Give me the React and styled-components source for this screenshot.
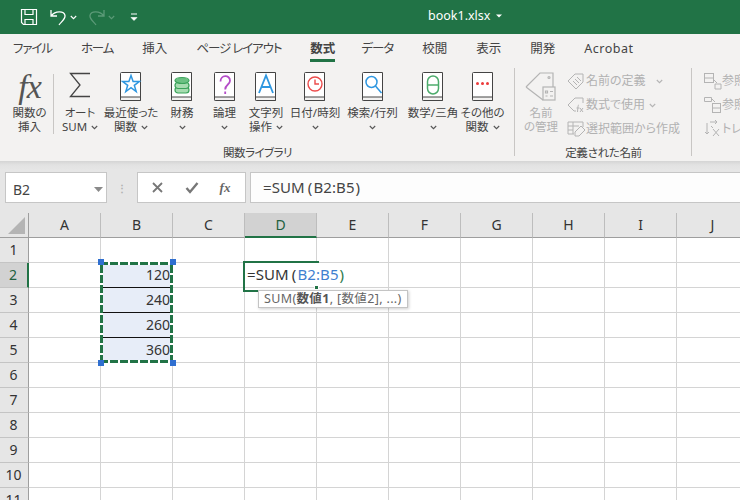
import React from "react";
import styled, { createGlobalStyle } from "styled-components";

const Global = createGlobalStyle`
  html, body { margin: 0; padding: 0; background: #fff; }
  body { font-family: "Noto Sans", "Noto Sans CJK JP", sans-serif; }
  * { box-sizing: border-box; font-feature-settings: "palt" !important; }
`;

const FONT = `"Noto Sans", "Noto Sans CJK JP", sans-serif`;
const GREEN = "#217346";

const Page = styled.div`
  width: 740px; height: 500px; overflow: hidden; display: flex; flex-direction: column; background: #fff;
`;
const TitleBar = styled.header`
  height: 34px; flex: none; background: ${GREEN}; display: flex; align-items: center; color: #fff;
`;
const Qat = styled.div`
  width: 428px; flex: none; display: flex; align-items: center; padding-left: 20px;
`;
const QatBtn = styled.span`
  display: inline-flex; align-items: center; margin-right: ${p => p.$mr}px;
`;
const Title = styled.div`
  font: 12.5px ${FONT}; display: flex; align-items: center; gap: 6px; color: #fff; margin-top: -3px;
`;
const Tabs = styled.nav`
  height: 28px; flex: none; background: #f3f2f1; display: flex; padding-left: 13px; gap: 29px;
`;
const Tab = styled.div`
  height: 28px; padding-top: 6px; font: ${p => (p.$active ? 700 : 400)} 12.5px/18px ${FONT}; color: #444; white-space: nowrap;
  letter-spacing: ${p => p.$ls || 0}px; margin-right: ${p => p.$mr || 0}px;
  border-bottom: 3px solid ${p => (p.$active ? GREEN : "transparent")};
`;
const Ribbon = styled.section`
  height: 99px; flex: none; background: #f3f2f1; display: flex; overflow: hidden; padding-left: 6px;
`;
const Group = styled.div`
  width: ${p => p.$w}px; flex: none; display: flex; flex-direction: column; position: relative; padding-top: 10px;
  &::after { content: ""; display: ${p => (p.$noSep ? "none" : "block")}; position: absolute; right: 0; top: 6px; bottom: 5px; width: 1px; background: #c8c6c4; }
`;
const GroupBody = styled.div`
  display: flex; height: 72px; flex: none;
`;
const GroupLabel = styled.div`
  font: 11.5px/16px ${FONT}; color: #444; text-align: center; margin-top: 1px; padding-right: ${p => p.$pr || 0}px; letter-spacing: ${p => p.$ls || 0}px; white-space: nowrap;
`;
const BigBtn = styled.div`
  width: ${p => p.$w}px; flex: none; display: flex; flex-direction: column; align-items: center; position: relative;
  ${p => p.$divider && `
    &::after { content: ""; position: absolute; right: -1px; top: 2px; height: 60px; width: 1px; background: #c8c6c4; }
    margin-right: 3px;
  `}
`;
const IconSlot = styled.div`
  height: 30px; display: flex; align-items: flex-start; justify-content: center; flex: none;
`;
const Label = styled.div`
  margin-top: 4px; font: 11.5px/14px ${FONT}; color: ${p => (p.$off ? "#b1b1b1" : "#444")}; text-align: center; white-space: nowrap;
  display: flex; flex-direction: column; align-items: center;
`;
const LabelLine = styled.span`
  display: flex; align-items: center; gap: 4px; height: 14px;
`;
const FxMark = styled.span`
  font: italic 34px/30px "Liberation Serif", serif; color: #555; letter-spacing: -1px;
`;
const SmallCol = styled.div`
  display: flex; flex-direction: column; gap: 6px; margin-left: ${p => p.$ml || 0}px;
`;
const SmallRow = styled.div`
  display: flex; align-items: center; gap: 0; height: 18px; font: 12px/18px ${FONT}; color: #b1b1b1; white-space: nowrap;
`;
const SmallText = styled.span`
  margin: 0 ${p => p.$mr || 4}px 0 0;
`;
const SmallIcon = styled.span`
  width: 19px; height: 18px; display: inline-flex; align-items: center; justify-content: center; flex: none;
`;
const FormulaBand = styled.div`
  height: 52px; flex: none; background: linear-gradient(#d4d4d4 0, #e2e2e2 4px, #e6e6e6 9px); display: flex; padding: 11px 0 0 5px;
`;
const NameBox = styled.div`
  width: 102px; height: 31px; background: #fff; border: 1px solid #c6c6c6; display: flex; align-items: center; justify-content: space-between;
  padding: 3px 3px 0 7px; font: 14px ${FONT}; color: #444;
`;
const Grip = styled.div`
  width: 30px; height: 31px; display: flex; align-items: center; justify-content: center; font: 700 10px/4px ${FONT}; color: #b0b0b0;
`;
const FxBox = styled.div`
  width: 109px; height: 31px; background: #fff; border: 1px solid #c6c6c6; display: flex; align-items: center; justify-content: space-around; padding: 0 4px 0 2px;
`;
const FxSmall = styled.span`
  font: italic 700 13px "Liberation Serif", serif; color: #666;
`;
const FormulaInput = styled.div`
  flex: 1; height: 31px; margin-left: 4px; background: #fdfdfd; border: 1px solid #c6c6c6; border-right: 0; padding-left: 12px;
  font: 15px/29px ${FONT}; letter-spacing: .1px; color: #444;
`;
const Paren = styled.span`
  margin: 0 ${p => (p.$open ? 1 : 0)}px 0 ${p => (p.$open ? 3 : 1)}px; color: ${p => p.$c || "inherit"};
`;
const Sheet = styled.div`
  position: relative; flex: 1; display: grid; grid-template-columns: 29px repeat(10, 72px);
  grid-template-rows: 25px repeat(11, 25px); overflow: hidden; background: #fff;
`;
const Corner = styled.div`
  background: #e6e6e6; border-right: 1px solid #9e9e9e; border-bottom: 1px solid #9e9e9e; display: flex; align-items: flex-end; justify-content: flex-end; padding: 0 3px 3px 0;
`;
const ColHead = styled.div`
  background: ${p => (p.$active ? "#d2d2d2" : "#e6e6e6")};
  border-right: 1px solid #bdbdbd;
  border-bottom: ${p => (p.$active ? `2px solid ${GREEN}` : "1px solid #9e9e9e")};
  font: 14px/24px ${FONT}; color: ${p => (p.$active ? "#215f3f" : "#333")}; text-align: center;
`;
const RowHead = styled.div`
  background: ${p => (p.$active ? "#d2d2d2" : "#e6e6e6")};
  border-right: ${p => (p.$active ? `2px solid ${GREEN}` : "1px solid #9e9e9e")};
  border-bottom: 1px solid #c4c4c4;
  font: 14px/24px ${FONT}; color: ${p => (p.$active ? "#215f3f" : "#333")}; text-align: center; padding-right: 1px;
`;
const Cell = styled.div`
  border-right: 1px solid #d4d4d4;
  border-bottom: 1px solid ${p => (p.$line ? "#111" : "#d4d4d4")};
  background: ${p => (p.$sel ? "#e7edf8" : "#fff")};
  font: 14px/24px ${FONT}; color: #333; text-align: right; padding-right: 2px;
`;
const Ants = styled.div`
  position: absolute; left: 100px; top: 49px; width: 73px; height: 101px;
  background:
    repeating-linear-gradient(90deg, ${GREEN} 0 8px, #fff 8px 10px) left top / 100% 3px no-repeat,
    repeating-linear-gradient(90deg, ${GREEN} 0 8px, #fff 8px 10px) left bottom / 100% 3px no-repeat,
    repeating-linear-gradient(0deg, ${GREEN} 0 8px, #fff 8px 10px) left top / 3px 100% no-repeat,
    repeating-linear-gradient(0deg, ${GREEN} 0 8px, #fff 8px 10px) right top / 3px 100% no-repeat;
`;
const Handle = styled.i`
  position: absolute; width: 6px; height: 6px; background: #2f6fd0; z-index: 2;
  left: ${p => p.$x}px; top: ${p => p.$y}px;
`;
const ActiveCell = styled.div`
  position: absolute; left: 243px; top: 48px; width: 104px; height: 27px; pointer-events: none;
  &::before { content: ""; position: absolute; left: 0; top: 0; width: 74px; height: 27px; border: 2px solid ${GREEN}; border-right: 0; }
`;
const EditText = styled.div`
  position: absolute; left: 2px; top: 2px; width: 102px; height: 23px; background: #fff; padding-left: 2px;
  font: 15px/22px ${FONT}; color: #333; letter-spacing: .1px; white-space: nowrap;
`;
const FillDot = styled.i`
  position: absolute; left: 71px; top: 24px; width: 5px; height: 5px; background: ${GREEN}; border: 1px solid #fff;
`;
const RefText = styled.span`
  color: ${p => p.$c};
`;
const Tip = styled.div`
  position: absolute; left: 258px; top: 77px; width: 150px; height: 18px; background: #fff; border: 1px solid #c4c4c4;
  box-shadow: 1px 1px 3px rgba(0,0,0,.2); font: 12.5px/16px ${FONT}; letter-spacing: .35px; color: #666; padding-left: 5px; white-space: nowrap;
`;
const TipBold = styled.b`
  font-weight: 700; color: #555;
`;

const Chev = ({ c = "#555" }) => (
  <svg width="7" height="5" viewBox="0 0 7 5"><path d="M.8 1l2.7 2.7L6.2 1" fill="none" stroke={c} strokeWidth="1.1" /></svg>
);

const Book = ({ children }) => (
  <svg width="22" height="29" viewBox="0 0 22 29">
    <path d="M.5 1.500a1 1 0 0 1 1-1h19v28h-19a1 1 0 0 1-1-1z" fill="#fff" stroke="#444" />
    <path d="M.5 25h20v3.500H1.500a1 1 0 0 1-1-1z" fill="#f3f2f1" stroke="#444" />
    {children}
  </svg>
);

const icons = {
  star: <path d="M11 3.500l2.100 6.100h6.200l-5 3.700 1.900 6.200-5.200-3.800-5.200 3.800 1.900-6.200-5-3.700h6.200z" fill="none" stroke="#2f97e0" strokeWidth="1.500" />,
  db: <g fill="#a6dcb0" stroke="#3aa35a" strokeWidth="1.200"><rect x="4" y="15" width="14" height="6" rx="3" /><rect x="4" y="10.500" width="14" height="6" rx="3" /><ellipse cx="11" cy="8.500" rx="7" ry="3" fill="#6cc183" /></g>,
  q: <path d="M6.500 9.500C6.500 2.500 16 2.500 16 8.800c0 3.700-4.800 3.900-4.800 8.700M11.200 19.500v2.500" fill="none" stroke="#b44cc8" strokeWidth="1.800" />,
  a: <path d="M4 21L11 3.500 18 21M6.300 15h9.400" fill="none" stroke="#2f97e0" strokeWidth="1.800" />,
  clock: <g fill="none" stroke="#ec4b4b" strokeWidth="1.400"><circle cx="11" cy="12" r="7" /><path d="M11 7.500V12h4" /></g>,
  search: <g fill="none" stroke="#2f97e0" strokeWidth="1.500"><circle cx="9.500" cy="10" r="5.500" /><path d="M13.500 14l6 7" /></g>,
  theta: <g fill="none" stroke="#4cab6b" strokeWidth="1.500"><rect x="5.500" y="4" width="11" height="18" rx="5.500" /><path d="M5.500 13h11" /></g>,
  dots: <g fill="#ec3b3b"><circle cx="5.500" cy="11.500" r="1.500" /><circle cx="10.500" cy="11.500" r="1.500" /><circle cx="15.500" cy="11.500" r="1.500" /></g>,
};

const buttons = [
  { w: 48, icon: "sum", lines: [["オート"], ["SUM", 1]] },
  { w: 54, icon: "star", lines: [["最近使った"], ["関数", 1]] },
  { w: 48, icon: "db", lines: [["財務"], ["", 1]] },
  { w: 37, icon: "q", lines: [["論理"], ["", 1]] },
  { w: 46, icon: "a", lines: [["文字列"], ["操作", 1]] },
  { w: 52, icon: "clock", lines: [["日付/時刻"], ["", 1]] },
  { w: 63, icon: "search", lines: [["検索/行列"], ["", 1]] },
  { w: 58, icon: "theta", lines: [["数学/三角"], ["", 1]] },
  { w: 41, icon: "dots", lines: [["その他の"], ["関数", 1]] },
];

const Lines = ({ lines, off }) => (
  <Label $off={off}>
    {lines.map(([t, ch], i) => (
      <LabelLine key={i}>{t}{ch ? <Chev /> : null}</LabelLine>
    ))}
  </Label>
);

const G = "#b4b4b4";
const TagSmall = () => (
  <svg width="19" height="18" viewBox="0 0 19 18" fill="none" stroke={G}><path d="M1 9l7-7h8v8l-7 7z" /><path d="M6 9l4 4M8 7l4 4M10 5l4 4" /></svg>
);
const TagFx = () => (
  <svg width="19" height="18" viewBox="0 0 19 18" fill="none" stroke={G}><path d="M9 15H7L1 9l7-7h8v5" /><path d="M12 9c-1 0-1 1-1.500 7M9.500 12h3M13 12l3 4M16 12l-3 4" /></svg>
);
const Pick = () => (
  <svg width="19" height="18" viewBox="0 0 19 18" fill="none" stroke={G}><path d="M1 2h15v5M1 2v12h6M1 6h11M1 10h5M6 2v12" /><path d="M8 12l6-6 4 4-6 6h-4z" /></svg>
);
const RefA = () => (
  <svg width="19" height="18" viewBox="0 0 19 18" fill="none" stroke={G}><rect x="1.500" y="1.500" width="9" height="9" /><path d="M1.500 6h9M11 8l3 3" /><path d="M12 12h6v5h-6z" /></svg>
);
const RefB = () => (
  <svg width="19" height="18" viewBox="0 0 19 18" fill="none" stroke={G}><path d="M1.500 1.500h7v4h-7zM12 6l-3-3" /><rect x="9.500" y="7.500" width="8" height="9" /><path d="M9.500 12h8" /></svg>
);
const RefX = () => (
  <svg width="19" height="18" viewBox="0 0 19 18" fill="none" stroke={G}><path d="M4 3v11M2 12l2 2 2-2M7 2h7M12 0l2 2-2 2M8 6l2 2M10 9l6 7M16 9l-6 7" /></svg>
);

const columns = ["A", "B", "C", "D", "E", "F", "G", "H", "I", "J"];
const values = { 2: "120", 3: "240", 4: "260", 5: "360" };
const rows = Array.from({ length: 11 }, (_, i) => i + 1);

export default function App() {
  return (
    <Page>
      <Global />
      <TitleBar>
        <Qat>
          <QatBtn $mr={12}>
            <svg width="18" height="18" viewBox="0 0 18 18" fill="none" stroke="#fff" strokeWidth="1.200">
              <path d="M1.500 1.500h15v15h-13l-2-2z" /><path d="M5 1.500v5h8v-5M5 16.500v-5h8v5" />
            </svg>
          </QatBtn>
          <QatBtn $mr={3}>
            <svg width="17" height="18" viewBox="0 0 17 18" fill="none" stroke="#fff" strokeWidth="1.300">
              <path d="M1 2v6h6M1.500 7.500C5 3 14 2.500 15 7.500c.6 3.500-4 6.500-6 9.500" />
            </svg>
          </QatBtn>
          <QatBtn $mr={11}><Chev c="#fff" /></QatBtn>
          <QatBtn $mr={3}>
            <svg width="17" height="18" viewBox="0 0 17 18" fill="none" stroke="#5c9a78" strokeWidth="1.300">
              <path d="M16 2v6h-6M15.500 7.500C12 3 3 2.500 2 7.500c-.6 3.500 4 6.500 6 9.500" />
            </svg>
          </QatBtn>
          <QatBtn $mr={15}><Chev c="#5c9a78" /></QatBtn>
          <QatBtn $mr={0}>
            <svg width="8" height="9" viewBox="0 0 8 9"><path d="M1 1h6" stroke="#fff" /><path d="M1 4.500l3 3 3-3z" fill="#fff" stroke="#fff" strokeWidth=".6" /></svg>
          </QatBtn>
        </Qat>
        <Title>
          book1.xlsx
          <svg width="6" height="4" viewBox="0 0 6 4"><path d="M0 .5h6L3 3.500z" fill="#fff" /></svg>
        </Title>
      </TitleBar>

      <Tabs>
        <Tab $ls={-1.1}>ファイル</Tab>
        <Tab $ls={-1.1}>ホーム</Tab>
        <Tab>挿入</Tab>
        <Tab $ls={-1.1}>ページ レイアウト</Tab>
        <Tab $active $mr={-3}>数式</Tab>
        <Tab $ls={-1}>データ</Tab>
        <Tab>校閲</Tab>
        <Tab>表示</Tab>
        <Tab>開発</Tab>
        <Tab $ls={0.5}>Acrobat</Tab>
      </Tabs>

      <Ribbon>
        <Group $w={509}>
          <GroupBody>
            <BigBtn $w={47} $divider>
              <IconSlot><FxMark>fx</FxMark></IconSlot>
              <Lines lines={[["関数の"], ["挿入"]]} />
            </BigBtn>
            {buttons.map((b, i) => (
              <BigBtn key={i} $w={b.w}>
                <IconSlot>
                  {b.icon === "sum" ? (
                    <svg width="22" height="26" viewBox="0 0 22 26" fill="none" stroke="#444" strokeWidth="1.300">
                      <path d="M21 1.500H1.500L11 13 1.500 24.500H21" />
                    </svg>
                  ) : (
                    <Book>{icons[b.icon]}</Book>
                  )}
                </IconSlot>
                <Lines lines={b.lines} />
              </BigBtn>
            ))}
          </GroupBody>
          <GroupLabel $pr={6} $ls={-0.5}>関数ライブラリ</GroupLabel>
        </Group>
        <Group $w={177}>
          <GroupBody>
            <BigBtn $w={52}>
              <IconSlot>
                <svg width="32" height="30" viewBox="0 0 32 30" fill="none" stroke={G} strokeWidth="1.200">
                  <path d="M1 15L15 1h13v14M18 28L1 15" /><circle cx="24" cy="5.500" r="1" />
                  <rect x="18" y="15" width="12" height="13" /><path d="M20.500 19h2v2h-2zM20.500 24h2M25 19.500h3M25 24h3" />
                </svg>
              </IconSlot>
              <Lines off lines={[["名前"], ["の管理"]]} />
            </BigBtn>
            <SmallCol>
              <SmallRow><SmallIcon><TagSmall /></SmallIcon><SmallText $mr={10}>名前の定義</SmallText><Chev c={G} /></SmallRow>
              <SmallRow><SmallIcon><TagFx /></SmallIcon><SmallText>数式で使用</SmallText><Chev c={G} /></SmallRow>
              <SmallRow><SmallIcon><Pick /></SmallIcon><SmallText>選択範囲から作成</SmallText></SmallRow>
            </SmallCol>
          </GroupBody>
          <GroupLabel $ls={-0.3}>定義された名前</GroupLabel>
        </Group>
        <Group $w={60} $noSep>
          <GroupBody>
            <SmallCol $ml={11}>
              <SmallRow><SmallIcon><RefA /></SmallIcon>参照元のトレース</SmallRow>
              <SmallRow><SmallIcon><RefB /></SmallIcon>参照先のトレース</SmallRow>
              <SmallRow><SmallIcon><RefX /></SmallIcon>トレース矢印の削除</SmallRow>
            </SmallCol>
          </GroupBody>
        </Group>
      </Ribbon>

      <FormulaBand>
        <NameBox>
          B2
          <svg width="9" height="5" viewBox="0 0 9 5"><path d="M0 0h9L4.500 5z" fill="#8a8a8a" /></svg>
        </NameBox>
        <Grip>⋮</Grip>
        <FxBox>
          <svg width="13" height="13" viewBox="0 0 13 13"><path d="M2 2l9 9M11 2l-9 9" stroke="#777" strokeWidth="1.800" fill="none" /></svg>
          <svg width="14" height="13" viewBox="0 0 14 13"><path d="M1.500 7l3.500 4 7.500-9" stroke="#777" strokeWidth="2.400" fill="none" /></svg>
          <FxSmall>fx</FxSmall>
        </FxBox>
        <FormulaInput>=SUM<Paren $open>(</Paren>B2:B5<Paren>)</Paren></FormulaInput>
      </FormulaBand>

      <Sheet>
        <Corner>
          <svg width="17" height="17" viewBox="0 0 17 17"><path d="M17 0v17H0z" fill="#b4b4b4" /></svg>
        </Corner>
        {columns.map(c => <ColHead key={c} $active={c === "D"}>{c}</ColHead>)}
        {rows.map(r => (
          <React.Fragment key={r}>
            <RowHead $active={r === 2}>{r}</RowHead>
            {columns.map(c => {
              const sel = c === "B" && values[r];
              return (
                <Cell key={c} $sel={sel} $line={c === "B" && r >= 2 && r <= 4}>
                  {sel ? values[r] : null}
                </Cell>
              );
            })}
          </React.Fragment>
        ))}
        <Ants />
        <Handle $x={98} $y={46} />
        <Handle $x={170} $y={46} />
        <Handle $x={98} $y={147} />
        <Handle $x={170} $y={147} />
        <ActiveCell>
          <EditText>=SUM<Paren $open>(</Paren><RefText $c="#3f7fd0">B2:B5</RefText><Paren $c="#2d7a4d">)</Paren></EditText>
          <FillDot />
        </ActiveCell>
        <Tip>SUM(<TipBold>数値1</TipBold>, [数値2], ...)</Tip>
      </Sheet>
    </Page>
  );
}
